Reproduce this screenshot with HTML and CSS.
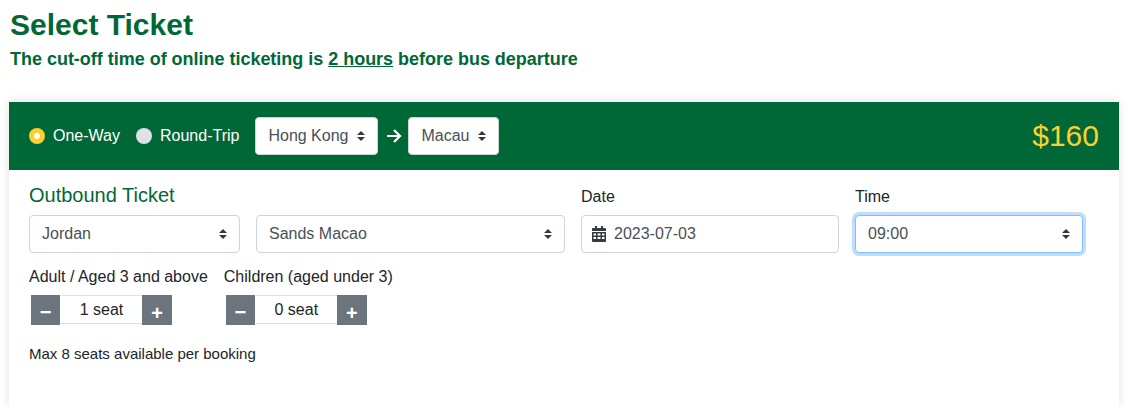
FILE: index.html
```html
<!DOCTYPE html>
<html lang="en">
<head>
  <meta charset="UTF-8">
  <title>Select Ticket</title>
  <meta name="viewport" content="width=device-width, initial-scale=1.0">
  <link rel="stylesheet" href="styles.css">
</head>
<body>

  <h1>Select Ticket</h1>
  <p class="cutoff">The cut-off time of online ticketing is <u>2 hours</u> before bus departure</p>

  <div class="card">
    <div class="card-head">
      <label class="radio"><span class="dot dot-on"></span>One-Way</label>
      <label class="radio"><span class="dot"></span>Round-Trip</label>
      <select class="select select-route route-from">
        <option>Hong Kong</option>
      </select>
      <svg class="arrow" viewBox="0 0 16 14" width="16" height="14">
        <path d="M1 7h13M8 1l6 6-6 6" fill="none" stroke="#fff" stroke-width="2.200"/>
      </svg>
      <select class="select select-route route-to">
        <option>Macau</option>
      </select>
      <div class="price">$160</div>
    </div>

    <div class="card-body">
      <div class="fields">
        <div class="ticket-title">Outbound Ticket</div>
        <div class="field-label">Date</div>
        <div class="field-label">Time</div>

        <select class="select">
          <option>Jordan</option>
        </select>
        <select class="select">
          <option>Sands Macao</option>
        </select>
        <div class="date-box">
          <svg class="cal" viewBox="0 0 14 16" width="14" height="16">
            <path fill="#343a40" fill-rule="evenodd" d="M3 0h2v2h4V0h2v2h2a1 1 0 0 1 1 1v2H0V3a1 1 0 0 1 1-1h2zM0 6h14v9a1 1 0 0 1-1 1H1a1 1 0 0 1-1-1zM1.500 7.500v2h2.500v-2zm4 0v2h3v-2zm4.500 0v2h2.500v-2zM1.500 11v2h2.500v-2zm4 0v2h3v-2zm4.500 0v2h2.500v-2z"/>
          </svg>
          2023-07-03
        </div>
        <select class="select select-focus">
          <option>09:00</option>
        </select>
      </div>

      <div class="seats">
        <div class="seat-group">
          <div class="field-label">Adult / Aged 3 and above</div>
          <div class="stepper">
            <button class="step">&minus;</button>
            <div class="count">1 seat</div>
            <button class="step step-plus">+</button>
          </div>
        </div>
        <div class="seat-group">
          <div class="field-label">Children (aged under 3)</div>
          <div class="stepper">
            <button class="step">&minus;</button>
            <div class="count">0 seat</div>
            <button class="step step-plus">+</button>
          </div>
        </div>
      </div>

      <p class="note">Max 8 seats available per booking</p>
    </div>
  </div>

</body>
</html>
```

FILE: styles.css
```css
body {
  font-family: 'Liberation Sans', Arial, sans-serif;
  background: #fff;
  color: #212529;
  margin: 0;
  padding: 0 9px;
  font-size: 16px;
  line-height: 24px;
}

h1 {
  color: #006837;
  font-size: 30px;
  font-weight: 700;
  line-height: 36px;
  margin: 0;
  padding: 7px 0 0 1px;
}

.cutoff {
  color: #006837;
  font-size: 18px;
  font-weight: 700;
  line-height: 24px;
  letter-spacing: -0.02px;
  margin: 4px 0 31px 1px;
}

.card {
  width: 1110px;
  height: 304px;
  background: #fff;
  box-shadow: 0 0 10px rgba(0,0,0,0.12);
}

.card-head {
  display: flex;
  align-items: center;
  height: 68px;
  padding: 0 20px;
  background: #006837;
  color: #fff;
}

.radio {
  display: flex;
  align-items: center;
  margin-right: 16px;
}

.dot {
  width: 16px;
  height: 16px;
  border-radius: 50%;
  background: #dee2e6;
  margin-right: 8px;
  box-sizing: border-box;
}

.dot-on {
  background: #fff;
  border: 5px solid #fdd02f;
}

.select {
  appearance: none;
  -webkit-appearance: none;
  font: inherit;
  color: #495057;
  height: 38px;
  width: 100%;
  box-sizing: border-box;
  padding: 0 28px 0 12px;
  border: 1px solid #ced4da;
  border-radius: 4px;
  background: #fff url("data:image/svg+xml,%3csvg xmlns='http://www.w3.org/2000/svg' viewBox='0 0 4 5'%3e%3cpath fill='%23343a40' d='M2 0L0 2h4zm0 5L0 3h4z'/%3e%3c/svg%3e") no-repeat right 12px center / 8px 10px;
}

.select-route {
  margin: 0;
}

.route-from { width: 123px; }
.route-to { width: 91px; }

.select-focus {
  border-color: #80bdff;
  box-shadow: 0 0 0 3px rgba(0,123,255,0.25);
}

.arrow {
  margin: 0 6px 0 8px;
}

.price {
  margin-left: auto;
  color: #fdd02f;
  font-size: 30px;
  line-height: 36px;
}

.card-body {
  padding: 15px 20px 0;
}

.fields {
  display: grid;
  grid-template-columns: 211px 309px 258px 228px;
  column-gap: 16px;
  row-gap: 6px;
}

.ticket-title {
  grid-column: span 2;
  color: #006837;
  font-size: 20px;
  line-height: 20px;
}

.date-box {
  display: flex;
  align-items: center;
  gap: 8px;
  height: 38px;
  box-sizing: border-box;
  padding: 0 10px;
  color: #495057;
  border: 1px solid #ced4da;
  border-radius: 4px;
}

.seats {
  display: flex;
  gap: 16px;
  margin-top: 12px;
}

.stepper {
  display: flex;
  width: 141px;
  height: 30px;
  margin: 6px 0 0 2px;
}

.step {
  width: 29px;
  height: 30px;
  padding: 3px 0 0;
  border: 0;
  background: #6c757d;
  color: #fff;
  font: 700 20px/24px 'Liberation Sans', Arial, sans-serif;
}

.step-plus {
  width: 30px;
  padding-top: 6px;
}

.count {
  flex: 1;
  height: 29px;
  margin-left: 1px;
  text-align: center;
  line-height: 27px;
  border-top: 1px solid #dee2e6;
  border-bottom: 1px solid #dee2e6;
  box-sizing: border-box;
}

.note {
  font-size: 15px;
  line-height: 21px;
  margin: 18px 0 0;
}
```
